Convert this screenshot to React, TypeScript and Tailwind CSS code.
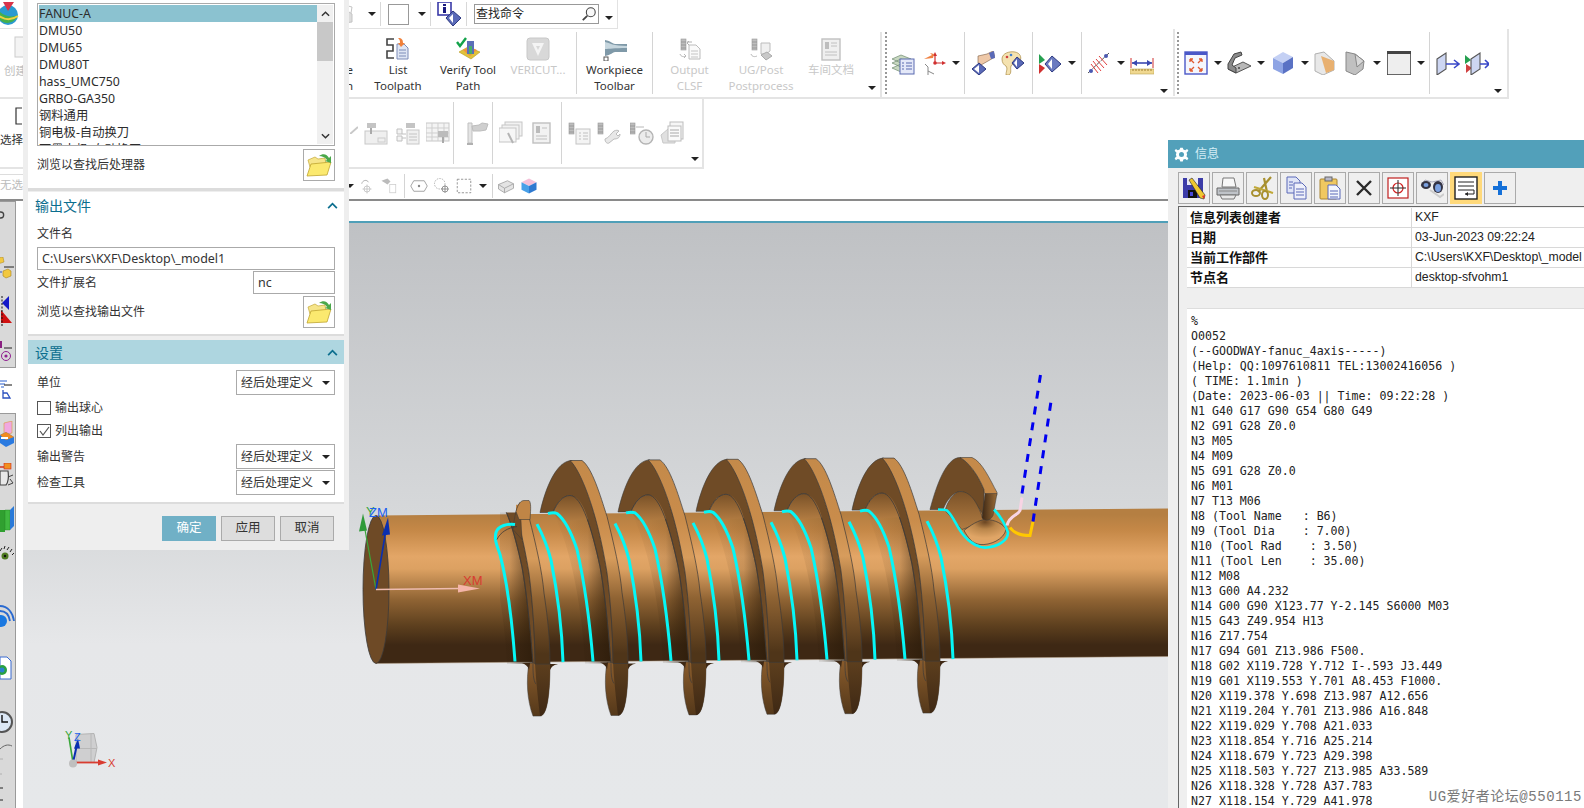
import React from 'react'

const codeLines = [
  '%',
  'O0052',
  '(--GOODWAY-fanuc_4axis-----)',
  '(Help: QQ:1097610811 TEL:13002416056 )',
  '( TIME: 1.1min )',
  '(Date: 2023-06-03 || Time: 09:22:28 )',
  'N1 G40 G17 G90 G54 G80 G49',
  'N2 G91 G28 Z0.0',
  'N3 M05',
  'N4 M09',
  'N5 G91 G28 Z0.0',
  'N6 M01',
  'N7 T13 M06',
  'N8 (Tool Name   : B6)',
  'N9 (Tool Dia    : 7.00)',
  'N10 (Tool Rad    : 3.50)',
  'N11 (Tool Len    : 35.00)',
  'N12 M08',
  'N13 G00 A4.232',
  'N14 G00 G90 X123.77 Y-2.145 S6000 M03',
  'N15 G43 Z49.954 H13',
  'N16 Z17.754',
  'N17 G94 G01 Z13.986 F500.',
  'N18 G02 X119.728 Y.712 I-.593 J3.449',
  'N19 G01 X119.553 Y.701 A8.453 F1000.',
  'N20 X119.378 Y.698 Z13.987 A12.656',
  'N21 X119.204 Y.701 Z13.986 A16.848',
  'N22 X119.029 Y.708 A21.033',
  'N23 X118.854 Y.716 A25.214',
  'N24 X118.679 Y.723 A29.398',
  'N25 X118.503 Y.727 Z13.985 A33.589',
  'N26 X118.328 Y.728 A37.783',
  'N27 X118.154 Y.729 A41.978',
]

const postList = ['FANUC-A', 'DMU50', 'DMU65', 'DMU80T', 'hass_UMC750', 'GRBO-GA350', '钢料通用', '铜电极-自动换刀', '石墨电极-自动换刀']

const infoRows = [
  ['信息列表创建者', 'KXF'],
  ['日期', '03-Jun-2023 09:22:24'],
  ['当前工作部件', 'C:\\Users\\KXF\\Desktop\\_model'],
  ['节点名', 'desktop-sfvohm1'],
]

const Ic = ({ children, className = '', sm }: { children: React.ReactNode; className?: string; sm?: boolean }) => (
  <svg viewBox="0 0 24 24" className={`${sm ? 'w-[18px] h-[18px]' : 'w-[24px] h-[24px]'} shrink-0 ${className}`}>
    {children}
  </svg>
)

const Caret = ({ className = '' }: { className?: string }) => (
  <span className={`w-0 h-0 shrink-0 border-x-[4px] border-x-transparent border-t-[4px] border-t-[#222] ${className}`} />
)

const Sep = ({ className = '' }: { className?: string }) => <span className={`w-px h-[62px] bg-[#d4d4d4] shrink-0 ${className}`} />

const Grip = ({ className = '' }: { className?: string }) => (
  <span className={`w-[2px] h-[62px] shrink-0 border-l-2 border-dotted border-[#999] ${className}`} />
)

const Folder = () => (
  <svg viewBox="0 0 28 28" className="w-[28px] h-[28px]">
    <path d="M3 9 L10 6 L13 8 L20 7 L21 13 L5 16 Z" fill="#f6e58a" stroke="#c4a83a" strokeWidth=".7" />
    <path d="M2 25 L6 13 L26 11 L22 24 Z" fill="#fbe96f" stroke="#bfa430" strokeWidth=".8" />
    <path d="M14 5 C18 2 22 3 24 7 L26 5 L26 12 L20 10 L22 9 C20 6 17 5 14 5 Z" fill="#4aa84a" />
  </svg>
)

const DialogSelect = () => (
  <div className="w-[99px] h-[25px] border border-[#aaa] bg-white flex items-center justify-between pl-[4px] pr-[4px] text-[12px] text-[#333]">
    <span>经后处理定义</span>
    <Caret />
  </div>
)

// disabled toolbar glyphs, all a bit washed out
const GreyTool = ({ x = 4 }: { x?: number }) => (
  <g>
    <rect x={x} y="2" width="5" height="11" fill="#bdbdbd" stroke="#9a9a9a" strokeWidth=".6" />
    <path d={`M${x} 5 h5 M${x} 8 h5 M${x} 11 h5`} stroke="#8a8a8a" strokeWidth=".7" />
  </g>
)
const GreyDoc = ({ x = 11, y = 8 }: { x?: number; y?: number }) => (
  <g>
    <path d={`M${x} ${y} h7 l4 4 v10 h-11 Z`} fill="#fafafa" stroke="#bcbcbc" />
    <path d={`M${x + 2} ${y + 6} h7 M${x + 2} ${y + 9} h7 M${x + 2} ${y + 12} h7`} stroke="#c4c4c4" />
  </g>
)

const ToolpathIcons = {
  list: (
    <Ic>
      <path d="M8 2 H1 V8 H7 V14 H1 V21 H8" fill="none" stroke="#444" strokeWidth="1.6" />
      <path d="M11 7 h7 l4 4 v11 h-11 Z" fill="#dfe6f4" stroke="#7d8cb8" />
      <path d="M13 13 h7 M13 16 h7 M13 19 h7" stroke="#7d8cb8" />
      <path d="M12 1 C16 1 17 3 17 6 L19 6 L15 10 L12 6 L14 6 C14 4 14 3 12 1 Z" fill="#f0803a" />
    </Ic>
  ),
  verify: (
    <Ic>
      <path d="M3 15 L12 10 L24 15 L15 22 Z" fill="#e0c23a" stroke="#b89a20" strokeWidth=".6" />
      <path d="M7 13 L14 10 L21 13 L14 19 Z" fill="#f09040" />
      <rect x="11" y="4" width="7" height="13" fill="#5b6fb8" />
      <rect x="13" y="9" width="3" height="8" fill="#48b068" />
      <path d="M1 5 L4 9 L10 1" fill="none" stroke="#12a24a" strokeWidth="2.4" />
    </Ic>
  ),
  vericut: (
    <Ic>
      <rect x="1" y="1" width="22" height="22" rx="3" fill="#d8d8d8" stroke="#c8c8c8" />
      <path d="M6 6 H18 L12 19 Z M10 9 L12 13 L14 9 Z" fill="#f4f4f4" fillRule="evenodd" />
    </Ic>
  ),
  workpiece: (
    <Ic>
      <path d="M2 3 C8 4 10 7 12 7 H24 V15 H12 C10 15 8 18 2 19 Z" fill="#7f99a8" />
      <path d="M2 5 C7 6 10 9 24 9 V11 C10 11 7 12 2 12 Z" fill="#c6d6de" />
      <rect x="1" y="20" width="4" height="4" fill="#fff" stroke="#555" />
    </Ic>
  ),
  clsf: (
    <Ic>
      <GreyTool x={3} />
      <path d="M9 5 h5 M11 4 l-2 2 l2 2" fill="none" stroke="#b0b0b0" />
      <GreyDoc />
      <path d="M2 17 C3 20 6 20 8 19 M6 17 l2 2 l-2 2" fill="none" stroke="#b8b8b8" />
    </Ic>
  ),
  post: (
    <Ic>
      <GreyTool x={3} />
      <path d="M12 6 h9 v8 l-4 3 h-5 Z" fill="#f0f0f0" stroke="#bcbcbc" />
      <path d="M12 18 L18 15 L23 19 L17 23 Z" fill="#c8c8c8" stroke="#aaa" />
      <path d="M2 17 C3 20 6 20 8 19" fill="none" stroke="#b8b8b8" />
    </Ic>
  ),
  shop: (
    <Ic>
      <rect x="3" y="2" width="18" height="21" fill="#efefef" stroke="#c0c0c0" strokeWidth="1.4" />
      <rect x="6" y="5" width="4" height="7" fill="#bdbdbd" />
      <path d="M12 6 h6 M12 9 h6 M6 15 h12 M6 18 h12" stroke="#c0c0c0" />
    </Ic>
  ),
}

const row2Grey = [
  <Ic key="a">
    <rect x="1" y="10" width="22" height="13" fill="#efefef" stroke="#c8c8c8" />
    <rect x="3" y="2" width="9" height="5" fill="#c4c4c4" />
    <path d="M7 7 v6" stroke="#aaa" strokeWidth="2" />
    <rect x="14" y="17" width="7" height="4" fill="none" stroke="#ccc" />
  </Ic>,
  <Ic key="b">
    <rect x="10" y="2" width="9" height="5" fill="#c4c4c4" />
    <rect x="11" y="9" width="12" height="14" fill="#f0f0f0" stroke="#c8c8c8" />
    <path d="M13 13 h8 M13 16 h8 M13 19 h8" stroke="#c4c4c4" />
    <path d="M1 8 h5 v5 h-5 Z M1 15 h5 v5 h-5 Z M6 13 h4 M6 17 h4" fill="#f4f4f4" stroke="#c0c0c0" />
  </Ic>,
  <Ic key="c">
    <rect x="0" y="2" width="23" height="18" fill="#f4f4f4" stroke="#c8c8c8" />
    <path d="M0 7 h23 M0 12 h23 M0 16 h23 M6 2 v18 M12 2 v18 M18 2 v18" stroke="#cfcfcf" />
    <rect x="12" y="10" width="10" height="6" fill="#bcbcbc" />
    <path d="M17 16 v6" stroke="#aaa" strokeWidth="2" />
  </Ic>,
  <Ic key="d">
    <path d="M3 2 h4 v20 h-4 Z" fill="#e4e4e4" stroke="#c0c0c0" />
    <path d="M2 23 h6" stroke="#b0b0b0" strokeWidth="2" />
    <path d="M7 5 L14 4 L17 2 L23 3 L21 9 L15 10 L8 10 Z" fill="#cfcfcf" stroke="#bdbdbd" />
  </Ic>,
  <Ic key="e">
    <rect x="6" y="1" width="17" height="14" fill="#f2f2f2" stroke="#c6c6c6" />
    <rect x="3" y="4" width="17" height="14" fill="#f2f2f2" stroke="#c6c6c6" />
    <rect x="0" y="7" width="17" height="14" fill="#f6f6f6" stroke="#c6c6c6" />
    <path d="M9 12 L14 22" stroke="#b4b4b4" strokeWidth="2" />
  </Ic>,
  <Ic key="f">
    <rect x="3" y="2" width="17" height="20" fill="#f2f2f2" stroke="#c0c0c0" strokeWidth="1.4" />
    <rect x="6" y="5" width="4" height="7" fill="#bbb" />
    <path d="M12 7 h5 M6 15 h11 M6 18 h11" stroke="#c0c0c0" />
  </Ic>,
  <Ic key="g">
    <GreyTool x={1} />
    <rect x="8" y="8" width="14" height="15" fill="#f4f4f4" stroke="#c4c4c4" />
    <path d="M11 12 h2 M15 12 h5 M11 15 h2 M15 15 h5 M11 18 h2 M15 18 h5" stroke="#c0c0c0" />
  </Ic>,
  <Ic key="h">
    <GreyTool x={1} />
    <path d="M8 18 C12 17 14 12 17 10 C19 9 21 9 22 10 L19 13 L21 15 L23 13 C23 17 20 18 17 18 L12 22 C10 23 8 21 8 18 Z" fill="#e8e8e8" stroke="#bdbdbd" />
  </Ic>,
  <Ic key="i">
    <GreyTool x={0} />
    <path d="M6 6 h8" stroke="#b8b8b8" />
    <circle cx="16" cy="16" r="7" fill="#ececec" stroke="#b4b4b4" strokeWidth="1.4" />
    <path d="M16 11 v5 h4" fill="none" stroke="#aaa" />
  </Ic>,
  <Ic key="j">
    <path d="M1 14 L8 8 L15 12 L15 22 L3 22 Z" fill="#e0e0e0" stroke="#c8c8c8" />
    <rect x="10" y="1" width="13" height="17" fill="#f6f6f6" stroke="#bdbdbd" />
    <rect x="8" y="5" width="13" height="15" fill="#fafafa" stroke="#bdbdbd" />
    <path d="M10 9 h9 M10 12 h9 M10 15 h9" stroke="#a8a8a8" />
  </Ic>,
]

const rightIcons = {
  stack: (
    <Ic>
      <path d="M1 8 L10 4 L20 8 L10 12 Z M1 12 L10 8 L20 12 L10 16 Z M1 17 L10 13 L20 17 L10 21 Z" fill="#c8d8c0" stroke="#6f8a70" strokeWidth=".7" />
      <rect x="9" y="8" width="14" height="15" fill="#e4e8f8" stroke="#5a6ab0" />
      <path d="M11 12 h2 M15 12 h6 M11 15 h2 M15 15 h6 M11 18 h2 M15 18 h6" stroke="#5a6ab0" />
    </Ic>
  ),
  axes: (
    <Ic>
      <path d="M13 12 V3 M13 12 H22" stroke="#d03030" strokeWidth="1.2" />
      <path d="M13 1 l-2 4 h4 Z M24 12 l-4 -2 v4 Z" fill="#d03030" />
      <path d="M2 8 L10 4 L8 2 L12 3 L11 7 Z" fill="#f08040" />
      <circle cx="13" cy="12" r="1.8" fill="#d03030" />
      <path d="M6 16 V24 M6 16 L3 13 M6 20 L12 23" stroke="#888" strokeWidth="1" />
    </Ic>
  ),
  hand: (
    <Ic>
      <path d="M7 5 L16 3 L22 0 L24 6 L17 10 L10 14 L7 12 Z" fill="#eec8a8" stroke="#7a5a40" strokeWidth=".6" />
      <path d="M18 2 L23 0 L24 7 L20 8 Z" fill="#5a6ab8" />
      <path d="M8 12 L15 18 L8 24 L1 18 Z" fill="#5a6ab8" stroke="#2c3880" />
      <path d="M8 14 L8 22 L3 18 Z" fill="#fff" />
    </Ic>
  ),
  palette: (
    <Ic>
      <path d="M2 8 C2 2 10 0 15 1 C20 2 22 6 20 10 C18 14 12 12 11 15 C10 18 12 22 9 24 L6 24 C6 20 8 18 6 15 C4 14 2 12 2 8 Z" fill="#f4e2b0" stroke="#a88840" strokeWidth=".7" />
      <circle cx="7" cy="6" r="1.3" fill="#d04040" />
      <circle cx="11" cy="4" r="1.3" fill="#4080d0" />
      <path d="M17 6 L24 12 L17 18 L12 12 Z" fill="#5a6ab8" stroke="#2c3880" />
      <path d="M17 8 L17 16 L14 12 Z" fill="#fff" />
    </Ic>
  ),
  run: (
    <Ic>
      <path d="M1 3 L7 9 L1 13 Z" fill="#26a050" />
      <path d="M1 13 L7 17 L1 23 Z" fill="#d03030" />
      <path d="M14 5 L23 13 L14 21 L7 13 Z" fill="#6a7ac0" stroke="#2c3880" />
      <path d="M14 8 L14 18 L10 13 Z" fill="#fff" />
    </Ic>
  ),
  antenna: (
    <Ic>
      <path d="M1 22 L22 2" stroke="#555" strokeDasharray="5 1" />
      <path d="M6 10 L14 20 M9 8 L17 17 M12 5 L20 14 M4 13 L11 22" stroke="#e04040" strokeWidth="1" />
      <circle cx="4" cy="20" r="2" fill="#4a58b0" />
      <circle cx="19" cy="5" r="2" fill="#4a58b0" />
    </Ic>
  ),
  ruler: (
    <Ic>
      <path d="M1 7 V17 M23 7 V17" stroke="#d03030" />
      <path d="M2 12 H22" stroke="#3a48b0" strokeWidth="1.6" />
      <path d="M2 12 l5 -3 v6 Z M22 12 l-5 -3 v6 Z" fill="#3a48b0" />
      <rect x="0" y="18" width="24" height="5" fill="#f0d890" stroke="#bca450" strokeWidth=".6" />
      <path d="M3 18 v2 M6 18 v2 M9 18 v2 M12 18 v2 M15 18 v2 M18 18 v2 M21 18 v2" stroke="#a08030" />
    </Ic>
  ),
  fit: (
    <Ic>
      <rect x="1" y="1" width="22" height="22" fill="#f4f6fc" stroke="#4a58c8" strokeWidth="1.4" />
      <rect x="1" y="1" width="22" height="3" fill="#4a58c8" />
      <path d="M6 8 L10 12 M6 8 h3 M6 8 v3 M18 8 L14 12 M18 8 h-3 M18 8 v3 M6 20 L10 16 M6 20 h3 M6 20 v-3 M18 20 L14 16 M18 20 h-3 M18 20 v-3" stroke="#e05a30" strokeWidth="1.3" fill="none" />
    </Ic>
  ),
  tray: (
    <Ic>
      <path d="M1 18 L9 22 L24 15 L16 11 Z" fill="#b8b8b8" stroke="#555" />
      <path d="M1 18 L1 13 L7 3 L14 1 L15 4 L8 7 L5 14 L9 17 L9 22 Z" fill="#8a8a8a" stroke="#444" />
      <circle cx="12" cy="17" r="1" fill="#444" />
    </Ic>
  ),
  cube: (
    <Ic>
      <path d="M2 7 L12 1 L22 6 L12 12 Z" fill="#c4d0f4" />
      <path d="M2 7 L12 12 V23 L2 18 Z" fill="#8ea4e4" />
      <path d="M22 6 V17 L12 23 V12 Z" fill="#5a72c4" />
    </Ic>
  ),
  folded: (
    <Ic>
      <path d="M3 3 L12 1 L22 10 L22 19 L11 24 L3 20 Z" fill="#e8e8e8" stroke="#b0b0b0" />
      <path d="M9 5 L22 10 L22 19 L14 22 Z" fill="#e8b070" />
    </Ic>
  ),
  wedge: (
    <Ic>
      <path d="M3 1 L12 3 L21 10 L20 18 L12 24 L3 20 Z" fill="#c0c0c0" stroke="#888" />
      <path d="M12 3 L14 16 L21 10 Z" fill="#d8d8d8" stroke="#888" />
    </Ic>
  ),
  sheet: (
    <Ic>
      <rect x="0" y="0" width="24" height="24" fill="#eeeeee" stroke="#444" strokeWidth="1.6" />
      <rect x="0" y="0" width="24" height="3" fill="#444" />
    </Ic>
  ),
  sect1: (
    <Ic>
      <path d="M1 8 L10 2 V18 L1 24 Z" fill="#cdd6f2" stroke="#555" strokeWidth="1.1" />
      <path d="M10 13 H22 M18 9 l5 4 l-5 4" fill="none" stroke="#3a48c8" strokeWidth="1.6" />
    </Ic>
  ),
  sect2: (
    <Ic>
      <path d="M0 4 L6 9 L0 13 Z" fill="#26a050" />
      <path d="M1 13 L7 17 L1 22 Z" fill="#d04040" />
      <path d="M6 8 L15 2 V18 L6 24 Z" fill="#cdd6f2" stroke="#555" strokeWidth="1.1" />
      <path d="M15 13 H24 M20 9 l4 4 l-4 4" fill="none" stroke="#3a48c8" strokeWidth="1.6" />
    </Ic>
  ),
}

const infoTools = [
  <Ic key="save">
    <rect x="1" y="2" width="20" height="20" fill="#3c3ca8" />
    <rect x="5" y="2" width="11" height="7" fill="#e8e8f4" />
    <rect x="6" y="14" width="9" height="8" fill="#111" />
    <rect x="8" y="16" width="3" height="4" fill="#4848d8" />
    <path d="M7 4 L10 2 L23 19 L22 23 L18 22 Z" fill="#f0c830" stroke="#222" strokeWidth=".6" />
    <path d="M20 20 L23 19 L22 23 Z" fill="#e03030" />
  </Ic>,
  <Ic key="print">
    <path d="M7 2 H18 L20 11 H6 Z" fill="#f8f8f8" stroke="#777" />
    <path d="M1 12 H23 V19 H1 Z" fill="#bfc3c8" stroke="#666" />
    <path d="M4 19 H20 L18 23 H6 Z" fill="#e8e8e8" stroke="#777" />
    <path d="M3 15 H21" stroke="#888" />
  </Ic>,
  <Ic key="cut">
    <path d="M21 1 L8 16 M14 2 L17 16 " stroke="#a89030" strokeWidth="2.2" />
    <path d="M4 11 L23 17" stroke="#c0a838" strokeWidth="2.2" />
    <ellipse cx="6" cy="17" rx="4" ry="3" fill="none" stroke="#a89030" strokeWidth="2" />
    <ellipse cx="15" cy="19" rx="3" ry="4" fill="none" stroke="#a89030" strokeWidth="2" />
  </Ic>,
  <Ic key="copy">
    <path d="M3 1 H12 L16 5 V17 H3 Z" fill="#dfe4f6" stroke="#5a68b8" />
    <path d="M10 7 H18 L22 11 V23 H10 Z" fill="#eef0fa" stroke="#5a68b8" />
    <path d="M12 13 H20 M12 16 H20 M12 19 H20 M5 6 H9 M5 9 H9 M5 12 H8" stroke="#5a68b8" />
  </Ic>,
  <Ic key="paste">
    <rect x="2" y="3" width="17" height="20" rx="1" fill="#f0c860" stroke="#a88430" />
    <rect x="7" y="1" width="7" height="4" fill="#b8b8c8" stroke="#666" />
    <path d="M10 9 H18 L22 13 V23 H10 Z" fill="#f4f6fc" stroke="#5a68b8" />
    <path d="M12 15 H20 M12 18 H20 M12 21 H20" stroke="#5a68b8" />
  </Ic>,
  <Ic key="x">
    <path d="M5 5 L19 19 M19 5 L5 19" stroke="#2a2a2a" strokeWidth="2.4" />
  </Ic>,
  <Ic key="target">
    <rect x="2" y="2" width="20" height="20" fill="#fff" stroke="#c02020" strokeWidth="1.2" />
    <circle cx="12" cy="12" r="5" fill="none" stroke="#d02020" strokeWidth="1.2" />
    <path d="M12 4 V20 M4 12 H20" stroke="#222" />
  </Ic>,
  <Ic key="bino">
    <path d="M1 10 L5 4 L12 6 L21 4 L24 9" fill="none" stroke="#aab" strokeWidth="1" />
    <ellipse cx="6" cy="9" rx="5" ry="4" fill="#334" />
    <ellipse cx="18" cy="11" rx="5" ry="6" fill="#334" />
    <ellipse cx="18" cy="12" rx="3" ry="4" fill="#7aa0e0" />
    <ellipse cx="6" cy="9" rx="2.5" ry="2" fill="#7aa0e0" />
    <path d="M10 14 L20 21 L24 18" fill="none" stroke="#ccc" strokeWidth="2" />
  </Ic>,
  <Ic key="wrap">
    <rect x="1" y="1" width="22" height="22" fill="#fff" stroke="#222" strokeWidth="1.4" />
    <path d="M4 6 H20 M4 10 H20 M4 14 H20 V18 H11" fill="none" stroke="#222" />
    <path d="M11 18 l3 -2 v4 Z" fill="#222" />
  </Ic>,
  <Ic key="plus">
    <path d="M12 5 V19 M5 12 H19" stroke="#1470d8" strokeWidth="4" />
  </Ic>,
]

// one turn of the thread, drawn at turn 0 and moved along the shaft
const ThreadTurn = ({ k, noCap }: { k: number; noCap?: boolean }) => (
  <g transform={`translate(${78 * k} ${-0.6 * k})`}>
    <path d="M540 513 C545 490 556 461 572 461 C580 470 597 510 607 573 C611 605 613 640 613 664 L611 664 C609 640 606 600 600 567 C592 530 582 496 570 496 C563 496 557 503 553 513 Z" fill="#6f4b26" stroke="#3c3a38" strokeWidth=".6" />
    <path d="M585 664 C582 610 572 550 553 513 C557 503 563 496 570 496 C582 496 592 530 600 567 C606 600 609 640 611 664 Z" fill="url(#fillet)" />
    {!noCap && <path d="M553 513 C557 503 563 496 570 496 C577 496 583 503 588 520 L560 522 Z" fill="url(#filletCap)" />}
    <path d="M553 513 C557 503 563 496 570 496 C582 496 592 530 600 567 C606 600 609 640 611 664" fill="none" stroke="#3c3a38" strokeWidth=".8" />
    <path d="M607 663 C604 680 605 700 611 716 L618 716 C625 716 628 695 628 664 Z" fill="url(#lowFlank)" stroke="#3c3a38" strokeWidth=".5" />
    <path d="M613 663 L628 663 C628 695 625 716 618 716 C616 700 614 680 613 663 Z" fill="url(#lowRim)" />
    <path d="M611 664 C611 672 611 680 614 684" fill="none" stroke="#3c3a38" strokeWidth=".7" />
    <path d="M570 461 L582 461 C592 468 600 495 607 517 C614 545 620 570 622 593 C626 620 628 640 628 664 L613 664 C613 640 611 605 607 573 C597 510 580 470 570 461 Z" fill="url(#rim)" stroke="#3c3a38" strokeWidth=".7" />
    <path d="M600 663 C603 664 606 666 607 670 L608 663 Z" fill="#3e2814" />
    <path d="M628 664 L628 670 C630 666 632 665 636 664 Z" fill="#3e2814" />
  </g>
)

const CutLines = ({ k, second }: { k: number; second?: boolean }) => (
  <g transform={`translate(${78 * k} ${-0.6 * k})`} fill="none" stroke="#06f6f6" strokeWidth="3">
    {!second && <path d="M548 514 C552 513 555 513 557 514 C566 521 572 535 577 550 C585 585 590 625 593 662" />}
    <path d="M615 524 C622 537 627 552 629 560 C635 590 640 630 641 662" />
  </g>
)

const Model = () => (
  <svg viewBox="23 224 1561 584" className="absolute inset-0 w-full h-full">
    <defs>
      <linearGradient id="shaft" gradientUnits="userSpaceOnUse" x1="0" y1="509" x2="0" y2="664">
        <stop offset=".04" stopColor="#b57f42" />
        <stop offset=".14" stopColor="#c58847" />
        <stop offset=".31" stopColor="#e3a667" />
        <stop offset=".39" stopColor="#dca162" />
        <stop offset=".59" stopColor="#8f6333" />
        <stop offset=".75" stopColor="#5f411f" />
        <stop offset=".88" stopColor="#3e2814" />
      </linearGradient>
      <linearGradient id="rim" gradientUnits="userSpaceOnUse" x1="0" y1="461" x2="0" y2="664">
        <stop offset="0" stopColor="#c48a4a" />
        <stop offset=".3" stopColor="#c98c4b" />
        <stop offset=".48" stopColor="#d79c5c" />
        <stop offset=".68" stopColor="#8f6333" />
        <stop offset=".95" stopColor="#4f3519" />
      </linearGradient>
      <linearGradient id="fillet" x1="0" y1="0" x2="1" y2="0">
        <stop offset="0" stopColor="#2a1a08" stopOpacity="0" />
        <stop offset=".6" stopColor="#2a1a08" stopOpacity=".12" />
        <stop offset="1" stopColor="#2a1a08" stopOpacity=".65" />
      </linearGradient>
      <linearGradient id="filletCap" x1="0" y1="0" x2="0" y2="1">
        <stop offset="0" stopColor="#7a5228" />
        <stop offset="1" stopColor="#b27c42" />
      </linearGradient>
      <linearGradient id="lowFlank" x1="0" y1="0" x2="0" y2="1">
        <stop offset="0" stopColor="#8a5c2c" />
        <stop offset="1" stopColor="#54381a" />
      </linearGradient>
      <linearGradient id="lowRim" x1="0" y1="0" x2="0" y2="1">
        <stop offset="0" stopColor="#5d3f1e" />
        <stop offset="1" stopColor="#3e2814" />
      </linearGradient>
      <linearGradient id="stem" x1="0" y1="0" x2="1" y2="0">
        <stop offset="0" stopColor="#3e2814" />
        <stop offset="1" stopColor="#9a6c38" />
      </linearGradient>
      <radialGradient id="bowl" cx=".5" cy=".1" r=".8">
        <stop offset="0" stopColor="#6a4522" />
        <stop offset=".35" stopColor="#b9854a" />
        <stop offset=".8" stopColor="#e0a566" />
      </radialGradient>
      <clipPath id="firstTurn">
        <rect x="500" y="513" width="90" height="225" />
        <rect x="516" y="505" width="74" height="10" />
      </clipPath>
    </defs>

    {/* shaft */}
    <path d="M376 516 L1168 509 L1168 657 L376 664 Z" fill="url(#shaft)" />
    <path d="M376 664 L1168 657" stroke="#b09a80" strokeWidth=".5" />
    <ellipse cx="376" cy="590" rx="13" ry="74" fill="#6e4a26" stroke="#3c3a38" strokeWidth=".8" />

    {/* thread */}
    <g clipPath="url(#firstTurn)">
      <ThreadTurn k={-1} noCap />
    </g>
    <path d="M513 530 C514 520 516 508 520 503 L522 540 Z" fill="#6f4b26" stroke="#3c3a38" strokeWidth=".5" />
    <path d="M516 512 C518 504 521 501 524 501 L529 501 C531 503 531 508 530 520 L519 520 Z" fill="#c08546" stroke="#3c3a38" strokeWidth=".6" />
    {[0, 1, 2, 3, 4].map(k => (
      <ThreadTurn k={k} key={k} />
    ))}

    {/* short end of the thread */}
    <path d="M930 510 C936 487 946 458 960 458 C968 462 978 475 984 490 L984 516 C972 500 968 492 960 492 C953 493 947 500 943 510 Z" fill="#6f4b26" stroke="#3c3a38" strokeWidth=".6" />
    <path d="M945 511 C948 500 955 492 960 492 C972 492 978 505 984 522 L962 530 Z" fill="url(#filletCap)" stroke="#3c3a38" strokeWidth=".6" />
    <path d="M960 458 L972 458 C982 462 990 480 997 493 C997 498 995 497 990 496 C985 496 984 494 984 490 C978 475 968 462 960 458 Z" fill="#c58a4a" stroke="#3c3a38" strokeWidth=".6" />
    <path d="M964 531 C975 522 982 520 986 520 C995 520 1004 525 1006 530 C1004 540 990 546 980 545 C972 544 968 538 964 531 Z" fill="url(#bowl)" stroke="#3c3a38" strokeWidth=".7" />
    <path d="M985 494 L997 494 L993 516 C990 522 984 522 982 518 Z" fill="url(#stem)" stroke="#3c3a38" strokeWidth=".5" />

    {/* tool path */}
    <path d="M515 525 C508 524 498 526 496 533 C494 540 497 546 500 555 C506 578 512 620 515 662" fill="none" stroke="#06f6f6" strokeWidth="3" />
    <path d="M497 540 C500 533 508 528 517 527" fill="none" stroke="#3c3a38" strokeWidth=".8" />
    <CutLines k={-1} second />
    {[0, 1, 2, 3, 4].map(k => (
      <CutLines k={k} key={k} />
    ))}
    <path d="M938 510 C942 510 945 510 947 511 C953 516 957 528 963 535 C970 544 980 549 987 548 C998 547 1008 541 1008 533 C1006 526 1000 516 994 510" fill="none" stroke="#06f6f6" strokeWidth="2.6" />
    <path d="M1007 526 C1009 516 1018 516 1020 511 L1022 498" fill="none" stroke="#f8d4e4" strokeWidth="3" />
    <path d="M1010 528 C1014 534 1020 536 1030 536 L1033 522" fill="none" stroke="#ffc800" strokeWidth="3" />
    <path d="M1022 494 L1041 372" stroke="#0000f0" strokeWidth="3" strokeDasharray="8 8" />
    <path d="M1033 522 L1051 402" stroke="#0000f0" strokeWidth="3" strokeDasharray="8 8" />

    {/* work coordinate system */}
    <path d="M376 590 L364 525" stroke="#3aa63a" strokeWidth="1.2" />
    <path d="M363 514 L359 532 L367 531 Z" fill="#2f9a3a" />
    <path d="M376 590 L386 530" stroke="#0a2fb0" strokeWidth="1.6" />
    <path d="M388 518 L382 536 L390 535 Z" fill="#0a2fb0" />
    <path d="M376 590 L460 589" stroke="#eebcb0" strokeWidth="1.6" />
    <path d="M480 589 L458 585 L458 593 Z" fill="#f4b4a8" />
    <text x="366" y="516" fontSize="13" fill="#3aa63a" fontFamily="Liberation Sans">Y</text>
    <text x="369" y="517" fontSize="13" fill="#2060f0" fontFamily="Liberation Sans">ZM</text>
    <text x="463" y="585" fontSize="13" fill="#d83c30" fontFamily="Liberation Sans">XM</text>

    {/* view triad */}
    <path d="M76 735 L94 734 L97 748 L94 763 L76 763 Z" fill="#cfcfd0" stroke="#b4b4b4" />
    <path d="M74 749 L97 749 M91 734 L91 763" stroke="#b8b8b8" />
    <path d="M73 763 L69 738" stroke="#3aa63a" strokeWidth="1.6" />
    <path d="M73 763 L77 745" stroke="#0a2fb0" strokeWidth="2" />
    <path d="M78 739 L74 749 L80 749 Z" fill="#0a2fb0" />
    <path d="M74 763 L100 763" stroke="#d83c30" strokeWidth="1.8" />
    <path d="M107 763 L98 760 L98 766 Z" fill="#d83c30" />
    <circle cx="73" cy="764" r="4" fill="#bfbfbf" />
    <text x="65" y="739" fontSize="11" fill="#3aa63a" fontFamily="Liberation Sans">Y</text>
    <text x="74" y="741" fontSize="11" fill="#2060f0" fontFamily="Liberation Sans">Z</text>
    <text x="108" y="767" fontSize="11" fill="#d83c30" fontFamily="Liberation Sans">X</text>
  </svg>
)

const RibbonBtn = ({ icon, top, bottom, off }: { icon: React.ReactNode; top: string; bottom?: string; off?: boolean }) => (
  <div className={`w-full flex flex-col items-center pt-[5px] text-[11.5px] leading-[16px] ${off ? 'text-[#c8c8c8]' : 'text-[#333]'}`}>
    {icon}
    <span className="mt-[1px] whitespace-nowrap">{top}</span>
    {bottom && <span className="whitespace-nowrap">{bottom}</span>}
  </div>
)

const LeftBar = () => (
  <div className="w-[16px] shrink-0 flex flex-col h-full overflow-hidden">
    <div className="h-[167px] shrink-0 bg-[#d9d9d9] border-r border-y border-[#9a9a9a] flex flex-col overflow-hidden">
      <svg viewBox="0 0 12 16" className="w-[8px] h-[16px] mt-[5px] shrink-0">
        <circle cx="1" cy="8" r="4.5" fill="none" stroke="#444" strokeWidth="2" />
      </svg>
      <svg viewBox="0 0 16 24" className="w-[16px] h-[24px] mt-[34px] shrink-0">
        <path d="M-3 1 L3 0 L4 5 L-2 7 Z" fill="#f2c840" stroke="#a88420" strokeWidth=".5" />
        <path d="M4 10 H14" stroke="#222" />
        <path d="M3 14 L8 12 L11 14 V19 L6 21 L3 19 Z" fill="#f2c840" stroke="#a88420" strokeWidth=".6" />
        <path d="M0 15 H2" stroke="#2a50c0" />
      </svg>
      <svg viewBox="0 0 16 32" className="w-[16px] h-[32px] mt-[15px] shrink-0">
        <path d="M9 0 V14 L2 7 Z" fill="#1418c8" />
        <path d="M1 14 L12 27 H1 Z" fill="#d01010" />
        <path d="M2 0 V30" stroke="#111" strokeDasharray="2 1.5" />
      </svg>
      <svg viewBox="0 0 16 24" className="w-[16px] h-[24px] mt-[13px] shrink-0">
        <rect x="-1" y="0" width="3" height="7" fill="#8a2080" />
        <path d="M4 7 H12" stroke="#222" />
        <circle cx="6" cy="15" r="4.5" fill="none" stroke="#902090" />
        <circle cx="6" cy="15" r="1.6" fill="#902090" />
      </svg>
    </div>
    <div className="h-[45px] shrink-0 bg-white flex flex-col">
      <svg viewBox="0 0 16 30" className="w-[16px] h-[30px] mt-[11px] shrink-0">
        <path d="M0 2 H7 M0 5 H5 M1 8 H4" stroke="#2a60d0" strokeWidth="1.2" />
        <path d="M4 6 H12" stroke="#111" />
        <path d="M3 11 V19 H10 L7 14 H3" fill="none" stroke="#2a50c0" strokeWidth="1.3" />
      </svg>
    </div>
    <div className="flex-1 bg-[#d9d9d9] border-r border-t border-[#9a9a9a] flex flex-col overflow-hidden">
      <svg viewBox="0 0 16 26" className="w-[16px] h-[26px] mt-[7px] shrink-0">
        <path d="M4 2 L12 0 V12 L4 14 Z" fill="#f0a8e0" stroke="#d89020" strokeWidth=".5" />
        <path d="M0 14 L6 11 L14 16 V22 L6 26 L0 22 Z" fill="#2a7ae0" />
        <path d="M0 14 L6 11 L14 16 L6 19 Z" fill="#f08a20" />
        <rect x="1" y="16" width="7" height="2" fill="#fff" />
      </svg>
      <svg viewBox="0 0 16 26" className="w-[16px] h-[26px] mt-[16px] shrink-0">
        <rect x="4" y="0" width="7" height="6" fill="#f09020" stroke="#d02020" strokeWidth=".6" />
        <path d="M0 4 H4" stroke="#d03020" strokeWidth="1.5" />
        <path d="M0 8 H8 C9 14 8 20 6 22 H0 Z" fill="#e8e8e8" stroke="#444" strokeWidth="1.2" />
        <path d="M8 14 L13 12 M8 22 L13 20 L10 16" stroke="#444" fill="none" />
      </svg>
      <svg viewBox="0 0 16 26" className="w-[16px] h-[26px] mt-[17px] shrink-0">
        <path d="M0 4 H5 V26 H0 Z" fill="#30a030" />
        <path d="M5 4 H10 V24 H5 Z" fill="#40b840" stroke="#208020" strokeWidth=".4" />
        <path d="M10 4 L14 0 V20 L10 24 Z" fill="#2a7ad8" />
      </svg>
      <svg viewBox="0 0 16 18" className="w-[16px] h-[18px] mt-[14px] shrink-0">
        <path d="M0 10 C4 2 8 2 13 12 L6 15 H0 Z" fill="#dadada" />
        <path d="M0 5 L2 2 M4 3 L5 0 M7 4 L9 1 M10 6 L12 3 M12 9 L14 7" stroke="#222" />
        <circle cx="5" cy="10" r="3.5" fill="#4f7a20" />
        <circle cx="5" cy="10" r="1.2" fill="#111" />
      </svg>
      <svg viewBox="0 0 16 26" className="w-[16px] h-[26px] mt-[37px] shrink-0">
        <circle cx="1" cy="20" r="6" fill="#1a78e0" />
        <path d="M0 10 C6 10 9 14 10 20 M0 5 C8 5 13 12 14 20" fill="none" stroke="#2a6ad0" strokeWidth="1.8" />
      </svg>
      <svg viewBox="0 0 16 26" className="w-[16px] h-[26px] mt-[29px] shrink-0">
        <path d="M0 1 H7 L11 5 V23 H0 Z" fill="#fff" stroke="#3a6ad0" />
        <circle cx="2" cy="14" r="5" fill="#2aa040" />
        <circle cx="2" cy="14" r="2.5" fill="#2a80d0" />
      </svg>
      <svg viewBox="0 0 16 26" className="w-[16px] h-[26px] mt-[27px] shrink-0">
        <circle cx="2" cy="13" r="10" fill="#dce8f6" stroke="#555" strokeWidth="2" />
        <path d="M2 6 V13 H8" fill="none" stroke="#111" strokeWidth="1.4" />
      </svg>
      <svg viewBox="0 0 16 60" className="w-[16px] h-[60px] mt-[6px] shrink-0">
        <path d="M0 8 C4 4 8 3 12 5" fill="none" stroke="#666" />
        <path d="M0 18 H3 M0 33 H2" stroke="#b0b0b0" />
        <path d="M0 47 H3" stroke="#222" />
        <path d="M0 59 H3" stroke="#222" />
      </svg>
    </div>
  </div>
)

const Dialog = () => (
  <div className="absolute left-[23px] top-0 w-[326px] h-[550px] bg-[#eeeeee] px-[5px] flex flex-col text-[12px] text-[#333]">
    <div className="h-[191px] shrink-0 bg-white border-b-[3px] border-[#dcdcdc] px-[9px] pt-[3px]">
      <div className="h-[143px] border border-[#aaa] flex overflow-hidden p-px text-[#2c2c2c] text-[12.3px]">
        <div className="w-[278px]">
          {postList.map((p, i) => (
            <div key={p} className={`h-[17px] leading-[17px] whitespace-nowrap ${i === 0 ? 'bg-[#8bc2d0]' : ''}`}>
              {p}
            </div>
          ))}
        </div>
        <div className="flex-1 bg-[#f0f0f0] flex flex-col items-center">
          <span className="h-[17px] flex items-center justify-center">
            <svg viewBox="0 0 10 6" className="w-[9px] h-[6px]">
              <path d="M1 5 L5 1 L9 5" fill="none" stroke="#333" strokeWidth="1.6" />
            </svg>
          </span>
          <span className="w-full h-[39px] bg-[#c8c8c8]" />
          <span className="flex-1" />
          <span className="h-[17px] flex items-center justify-center">
            <svg viewBox="0 0 10 6" className="w-[9px] h-[6px]">
              <path d="M1 1 L5 5 L9 1" fill="none" stroke="#333" strokeWidth="1.6" />
            </svg>
          </span>
        </div>
      </div>
      <div className="flex items-center justify-between mt-[3px]">
        <span>浏览以查找后处理器</span>
        <span className="w-[32px] h-[32px] border border-[#aaa] flex items-center justify-center">
          <Folder />
        </span>
      </div>
    </div>

    <div className="h-[144px] shrink-0 mt-[1px] bg-white border-b-[2px] border-[#dcdcdc] px-[9px] relative">
      <div className="h-[26px] flex items-center justify-between">
        <span className="text-[14px] text-[#0b6e8e] ml-[-2px]">输出文件</span>
        <svg viewBox="0 0 12 8" className="w-[11px] h-[7px] mr-[-3px]">
          <path d="M1 7 L6 2 L11 7" fill="none" stroke="#0b6e8e" strokeWidth="2" />
        </svg>
      </div>
      <div className="h-[17px] mt-[7px] leading-[17px]">文件名</div>
      <div className="h-[23px] mt-[5px] border border-[#aaa] pl-[4px] leading-[21px] text-[12.5px]">C:\Users\KXF\Desktop\_model1</div>
      <div className="flex items-center justify-between mt-[1px]">
        <span>文件扩展名</span>
        <span className="w-[82px] h-[23px] border border-[#aaa] pl-[4px] leading-[21px] text-[12.5px]">nc</span>
      </div>
      <div className="flex items-center justify-between mt-[2px]">
        <span>浏览以查找输出文件</span>
        <span className="w-[32px] h-[32px] border border-[#aaa] flex items-center justify-center">
          <Folder />
        </span>
      </div>
    </div>

    <div className="h-[24px] shrink-0 mt-[4px] bg-[#aed6e0] flex items-center justify-between pl-[7px] pr-[6px]">
      <span className="text-[14px] text-[#0b6e8e]">设置</span>
      <svg viewBox="0 0 12 8" className="w-[11px] h-[7px]">
        <path d="M1 7 L6 2 L11 7" fill="none" stroke="#0b6e8e" strokeWidth="2" />
      </svg>
    </div>
    <div className="h-[140px] shrink-0 bg-white border-b-[2px] border-[#dcdcdc] px-[9px] pt-[6px]">
      <div className="flex items-center justify-between">
        <span>单位</span>
        <DialogSelect />
      </div>
      <div className="flex items-center gap-[4px] h-[13px] mt-[6px]">
        <span className="w-[14px] h-[14px] border border-[#555]" />
        <span>输出球心</span>
      </div>
      <div className="flex items-center gap-[4px] h-[13px] mt-[10px]">
        <span className="w-[14px] h-[14px] border border-[#555] flex items-center justify-center">
          <svg viewBox="0 0 12 12" className="w-[12px] h-[12px]">
            <path d="M2 6 L5 10 L11 2" fill="none" stroke="#555" strokeWidth="1.2" />
          </svg>
        </span>
        <span>列出输出</span>
      </div>
      <div className="flex items-center justify-between mt-[7px]">
        <span>输出警告</span>
        <DialogSelect />
      </div>
      <div className="flex items-center justify-between mt-[1px]">
        <span>检查工具</span>
        <DialogSelect />
      </div>
    </div>
    <div className="flex justify-end gap-[5px] pr-[10px] mt-[12px]">
      <span className="w-[54px] h-[25px] bg-[#70b0c6] text-white flex items-center justify-center text-[12.5px]">确定</span>
      <span className="w-[54px] h-[25px] bg-[#dddddd] border border-[#aaa] flex items-center justify-center text-[12.5px]">应用</span>
      <span className="w-[54px] h-[25px] bg-[#dddddd] border border-[#aaa] flex items-center justify-center text-[12.5px]">取消</span>
    </div>
  </div>
)

const InfoWindow = () => (
  <div className="absolute left-[1168px] top-[140px] w-[416px] h-[668px] bg-[#efefef] flex flex-col overflow-hidden">
    <div className="h-[28px] shrink-0 bg-[#52a0ba] flex items-center pl-[6px] gap-[6px]">
      <svg viewBox="0 0 24 24" className="w-[15px] h-[15px]">
        <path d="M10 1 H14 L15 4 L18 5 L21 3 L23 6 L20 9 L21 12 L20 15 L23 18 L21 21 L18 19 L15 20 L14 23 H10 L9 20 L6 19 L3 21 L1 18 L4 15 L3 12 L4 9 L1 6 L3 3 L6 5 L9 4 Z M12 8 A4 4 0 1 0 12 16 A4 4 0 1 0 12 8 Z" fill="#fff" fillRule="evenodd" />
      </svg>
      <span className="text-[12px] text-[#d4edf5]">信息</span>
    </div>
    <div className="flex gap-[2px] pl-[10px] mt-[4px] h-[32px] shrink-0">
      {infoTools.map((t, i) => (
        <span key={t.key} className={`w-[32px] h-[32px] flex items-center justify-center border ${i === 8 ? 'bg-[#ffd97a] border-[#ffd97a]' : 'border-[#aaa]'}`}>
          {t}
        </span>
      ))}
    </div>
    <div className="flex-1 ml-[10px] mt-[2px] border-l border-t border-[#666] pl-[8px] pt-px flex flex-col min-h-0">
      {infoRows.map(r => (
        <div key={r[0]} className="h-[20px] shrink-0 flex bg-white border-b border-[#d8d8d8] overflow-hidden">
          <span className="w-[225px] shrink-0 border-r border-[#d8d8d8] pl-[3px] font-bold text-[13px] leading-[19px] text-[#111]">{r[0]}</span>
          <span className="pl-[3px] whitespace-nowrap text-[12.25px] leading-[19px] text-[#222] font-['Liberation_Sans',sans-serif]">{r[1]}</span>
        </div>
      ))}
      <div className="h-[20px] shrink-0" />
      <div className="flex-1 bg-white border-t border-[#dddddd] pl-[4px] pt-[5px] font-['DejaVu_Sans_Mono',monospace] text-[11.6px] leading-[15px] text-[#222]">
        {codeLines.map(l => (
          <div key={l} className="whitespace-pre h-[15px]">
            {l}
          </div>
        ))}
      </div>
    </div>
  </div>
)

export default function App() {
  return (
    <div className="relative w-[1584px] h-[808px] overflow-hidden bg-white flex flex-col font-['Noto_Sans','Noto_Sans_CJK_SC',sans-serif]">
      {/* quick access row */}
      <div className="h-[29px] w-[618px] shrink-0 flex items-center border-b border-r border-[#e2e2e2]">
        <svg viewBox="0 0 22 24" className="w-[22px] h-[24px] shrink-0">
          <circle cx="8" cy="13" r="10" fill="#2a9ad0" />
          <path d="M-1 9 C4 14 12 16 18 13 C16 20 6 24 0 18 Z" fill="#45b04a" />
          <path d="M-1 14 C5 18 12 18 18 14" stroke="#f0d040" strokeWidth="2" fill="none" />
          <path d="M3 0 H14 L8 9 Z" fill="#d8344a" />
        </svg>
        <Ic className="ml-[316px]">
          <path d="M2 14 L8 8 L14 12 L14 20 L6 21 Z" fill="#dcdcdc" stroke="#c4c4c4" />
          <path d="M6 3 L14 5 L13 11" fill="none" stroke="#c4c4c4" />
        </Ic>
        <Caret className="ml-[6px]" />
        <span className="w-px h-[24px] bg-[#d8d8d8] ml-[4px]" />
        <span className="w-[21px] h-[21px] border border-[#999] bg-white ml-[7px]" />
        <Caret className="ml-[9px]" />
        <span className="w-px h-[24px] bg-[#d8d8d8] ml-[4px]" />
        <Ic className="ml-[6px]">
          <rect x="1" y="0" width="13" height="13" fill="#fff" stroke="#3a3aa8" strokeWidth="1.6" />
          <path d="M6 2 h3 v2 h-3 Z M6 5 h3 v6 h-3 Z" fill="#1a1a80" />
          <path d="M16 9 L24 16 L16 24 L9 16 Z" fill="#5a6ab8" stroke="#2c3880" />
          <path d="M16 12 L16 21 L12 16 Z" fill="#fff" />
        </Ic>
        <span className="w-px h-[24px] bg-[#d8d8d8] ml-[5px]" />
        <div className="w-[125px] h-[20px] border border-[#999] ml-[7px] flex items-center justify-between pl-[1px] pr-[1px] text-[12px] text-[#222]">
          <span>查找命令</span>
          <svg viewBox="0 0 18 18" className="w-[16px] h-[16px]">
            <circle cx="11" cy="7" r="5" fill="#f8f8f8" stroke="#444" strokeWidth="1.2" />
            <path d="M7 11 L2 16" stroke="#444" strokeWidth="2" />
          </svg>
        </div>
        <Caret className="ml-[6px] mt-[8px]" />
      </div>

      {/* ribbon */}
      <div className="h-[70px] w-[1509px] shrink-0 flex border-b-2 border-r-2 border-[#e4e4e4] pt-[3px]">
        <div className="w-[353px] shrink-0 relative text-[11.5px] leading-[16px] text-[#c0c0c0]">
          <svg viewBox="0 0 24 24" className="w-[24px] h-[24px] ml-[12px] mt-[3px]">
            <rect x="3" y="2" width="18" height="20" fill="#f4f4f4" stroke="#ccc" />
          </svg>
          <div className="ml-[4px] mt-[4px]">创建</div>
          <div className="absolute right-0 top-[30px] text-right text-[#333]">
            Create
            <br />
            Operation
          </div>
        </div>
        <div className="w-[80px] shrink-0 pl-[10px]">
          <RibbonBtn icon={ToolpathIcons.list} top="List" bottom="Toolpath" />
        </div>
        <div className="w-[70px] shrink-0">
          <RibbonBtn icon={ToolpathIcons.verify} top="Verify Tool" bottom="Path" />
        </div>
        <div className="w-[70px] shrink-0">
          <RibbonBtn icon={ToolpathIcons.vericut} top="VERICUT..." off />
        </div>
        <Sep className="ml-[3px]" />
        <div className="w-[75px] shrink-0">
          <RibbonBtn icon={ToolpathIcons.workpiece} top="Workpiece" bottom="Toolbar" />
        </div>
        <Sep />
        <div className="w-[73px] shrink-0">
          <RibbonBtn icon={ToolpathIcons.clsf} top="Output" bottom="CLSF" off />
        </div>
        <div className="w-[70px] shrink-0">
          <RibbonBtn icon={ToolpathIcons.post} top="UG/Post" bottom="Postprocess" off />
        </div>
        <div className="w-[70px] shrink-0">
          <RibbonBtn icon={ToolpathIcons.shop} top="车间文档" off />
        </div>
        <Caret className="self-end mb-[7px] ml-[2px]" />
        <span className="w-[2px] h-full bg-[#e4e4e4] ml-[4px] shrink-0" />
        <div className="flex items-center h-[62px]">
          <Grip className="ml-[3px]" />
          <span className="ml-[4px]">{rightIcons.stack}</span>
          <span className="ml-[7px]">{rightIcons.axes}</span>
          <Caret className="ml-[6px]" />
          <Sep className="ml-[4px]" />
          <span className="ml-[6px]">{rightIcons.hand}</span>
          <span className="ml-[5px]">{rightIcons.palette}</span>
          <Sep className="ml-[8px]" />
          <span className="ml-[5px]">{rightIcons.run}</span>
          <Caret className="ml-[6px]" />
          <Sep className="ml-[5px]" />
          <span className="ml-[5px]">{rightIcons.antenna}</span>
          <Caret className="ml-[6px]" />
          <span className="ml-[5px]">{rightIcons.ruler}</span>
          <Caret className="ml-[6px] self-end mb-[1px]" />
          <span className="w-[2px] h-[67px] bg-[#e4e4e4] ml-[5px] self-start mt-[-3px]" />
          <Grip className="ml-[2px]" />
          <span className="ml-[5px]">{rightIcons.fit}</span>
          <Caret className="ml-[6px]" />
          <span className="ml-[5px]">{rightIcons.tray}</span>
          <Caret className="ml-[6px]" />
          <span className="ml-[6px]">{rightIcons.cube}</span>
          <Caret className="ml-[6px]" />
          <span className="ml-[3px]">{rightIcons.folded}</span>
          <span className="ml-[7px]">{rightIcons.wedge}</span>
          <Caret className="ml-[6px]" />
          <span className="ml-[6px]">{rightIcons.sheet}</span>
          <Caret className="ml-[6px]" />
          <Sep className="ml-[4px]" />
          <span className="ml-[6px]">{rightIcons.sect1}</span>
          <span className="ml-[5px]">{rightIcons.sect2}</span>
          <Caret className="ml-[5px] self-end mb-[1px]" />
        </div>
      </div>

      {/* second ribbon row, everything disabled */}
      <div className="h-[70px] w-[704px] shrink-0 flex items-center border-b-2 border-r-2 border-[#e4e4e4]">
        <div className="w-[350px] shrink-0 self-start relative text-[11.5px] text-[#333]">
          <svg viewBox="0 0 8 18" className="w-[8px] h-[18px] ml-[15px] mt-[8px]">
            <path d="M7 1 H1 V17 H7" fill="none" stroke="#333" strokeWidth="1.2" />
          </svg>
          <div className="mt-[6px]">选择</div>
        </div>
        <svg viewBox="0 0 8 8" className="w-[8px] h-[8px] shrink-0 mt-[-6px]">
          <path d="M0 8 L8 1" stroke="#c8c8c8" strokeWidth="2" />
        </svg>
        <span className="ml-[6px]">{row2Grey[0]}</span>
        <span className="ml-[8px]">{row2Grey[1]}</span>
        <span className="ml-[6px]">{row2Grey[2]}</span>
        <Sep className="ml-[3px]" />
        <span className="ml-[11px]">{row2Grey[3]}</span>
        <Sep className="ml-[3px]" />
        <span className="ml-[6px]">{row2Grey[4]}</span>
        <span className="ml-[7px]">{row2Grey[5]}</span>
        <Sep className="ml-[7px]" />
        <span className="ml-[6px]">{row2Grey[6]}</span>
        <span className="ml-[5px]">{row2Grey[7]}</span>
        <span className="ml-[9px]">{row2Grey[8]}</span>
        <span className="ml-[6px]">{row2Grey[9]}</span>
        <Caret className="ml-[7px] self-end mb-[6px]" />
      </div>

      {/* selection bar */}
      <div className="h-[32px] shrink-0 flex items-center border-b-2 border-[#8a8a8a]">
        <div className="w-[340px] shrink-0 border-t border-[#ddd] text-[11.5px] text-[#bbb] pt-px">无选择</div>
        <div className="flex items-center mt-[4px]">
          <Caret className="ml-[6px]" />
          <Ic sm className="ml-[4px]">
            <path d="M12 10 V22 M6 16 H18" stroke="#bbb" />
            <circle cx="12" cy="16" r="4" fill="none" stroke="#bbb" />
            <path d="M5 9 C6 4 12 3 14 7" fill="none" stroke="#999" />
          </Ic>
          <Ic sm className="ml-[4px]">
            <path d="M2 5 L10 2 L14 6 L10 10 Z" fill="#bbb" />
            <rect x="13" y="10" width="8" height="11" fill="none" stroke="#ccc" />
          </Ic>
          <span className="w-px h-[24px] bg-[#d4d4d4] ml-[6px]" />
          <Ic sm className="ml-[5px]">
            <path d="M5 5 H19 L23 12 L19 19 H5 L1 12 Z" fill="none" stroke="#888" />
            <circle cx="12" cy="12" r="1.6" fill="#888" />
          </Ic>
          <Ic sm className="ml-[5px]">
            <circle cx="9" cy="9" r="7" fill="none" stroke="#999" strokeDasharray="2 1.5" />
            <circle cx="16" cy="16" r="4" fill="#fff" stroke="#777" />
            <path d="M16 11 V21 M11 16 H21" stroke="#777" />
          </Ic>
          <Ic sm className="ml-[4px]">
            <rect x="3" y="3" width="18" height="18" fill="none" stroke="#777" strokeDasharray="3 2" />
          </Ic>
          <Caret className="ml-[6px]" />
          <span className="w-px h-[24px] bg-[#d4d4d4] ml-[5px]" />
          <Ic sm className="ml-[4px]">
            <path d="M2 10 L14 5 L22 9 L22 15 L10 21 L2 16 Z" fill="#e4e4e4" stroke="#999" />
            <path d="M2 10 L10 15 L22 9 M10 15 V21" fill="none" stroke="#999" />
          </Ic>
          <Ic sm className="ml-[5px]">
            <path d="M2 7 L12 2 L22 7 L12 12 Z" fill="#f4c0d8" />
            <path d="M2 7 L12 12 V22 L2 17 Z" fill="#48a0e8" />
            <path d="M22 7 V17 L12 22 V12 Z" fill="#2f7ad0" />
          </Ic>
        </div>
      </div>

      <div className="flex-1 flex min-h-0">
        <LeftBar />
        <div className="flex-1 flex flex-col pl-[7px] min-w-0">
          <div className="h-[22px] shrink-0 bg-white border-b-2 border-[#4f9fb8]" />
          <div className="flex-1 relative bg-[linear-gradient(180deg,#bfc1c4_0%,#d6d8da_50%,#e6e7e9_72%,#e6e8ea_100%)]">
            <Model />
          </div>
        </div>
      </div>

      <Dialog />
      <InfoWindow />

      <div className="absolute right-[2px] bottom-[0px] text-[14px] tracking-[0.55px] text-[#7a7a7a] font-['Liberation_Mono','Noto_Sans_CJK_SC',monospace] [text-shadow:0_0_2px_#fff]">
        UG爱好者论坛@550115
      </div>
    </div>
  )
}
